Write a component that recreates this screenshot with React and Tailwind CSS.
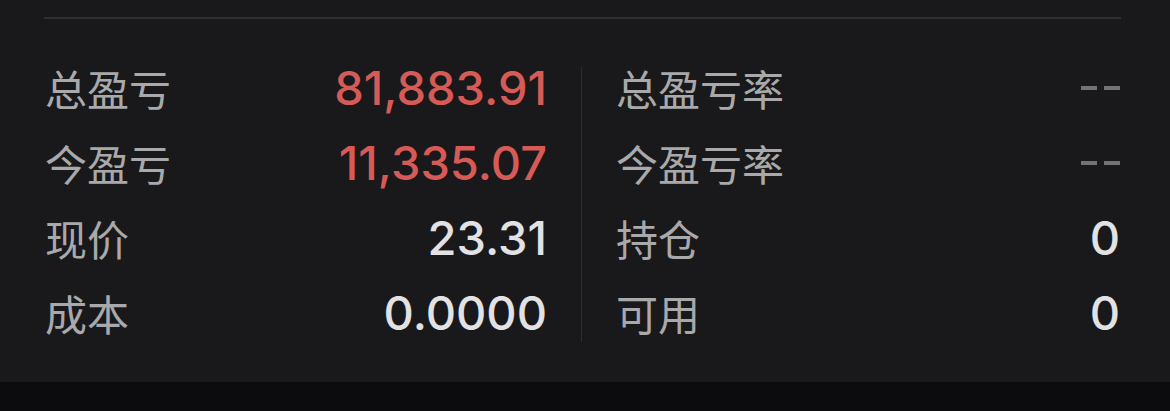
const LEFT = [
  { label: '总盈亏', value: '81,883.91', tone: 'red' },
  { label: '今盈亏', value: '11,335.07', tone: 'red' },
  { label: '现价', value: '23.31', tone: 'white' },
  { label: '成本', value: '0.0000', tone: 'white' },
]

const RIGHT = [
  { label: '总盈亏率', value: '--', tone: 'dim' },
  { label: '今盈亏率', value: '--', tone: 'dim' },
  { label: '持仓', value: '0', tone: 'white' },
  { label: '可用', value: '0', tone: 'white' },
]

const TONES = {
  red: 'text-[#d65a56]',
  white: 'text-[#e2e2e4]',
}

function Dashes() {
  // the "--" placeholder is drawn wider than a hyphen glyph
  return (
    <span className="flex items-center gap-[7px]" aria-label="--">
      <span className="h-[4px] w-[16px] bg-[#737376]" />
      <span className="h-[4px] w-[16px] bg-[#737376]" />
    </span>
  )
}

function Row({ r }) {
  return (
    <div className="flex h-[75px] items-center justify-between">
      <span className="text-[42px] leading-none text-[#a9a9ac] font-['Noto_Sans_CJK_SC',sans-serif]">{r.label}</span>
      {r.tone === 'dim' ? (
        <Dashes />
      ) : (
        <span className={`text-[47px] leading-none font-medium font-['Inter',sans-serif] ${TONES[r.tone]}`}>{r.value}</span>
      )}
    </div>
  )
}

export default function App() {
  return (
    <div className="flex h-[411px] w-[1170px] flex-col bg-[#19191b]">
      <div className="px-[44px] pt-[17px]">
        <div className="h-[2px] w-[1077px] bg-[#2f2f32]" />
      </div>
      <div className="flex pl-[45px] pt-[31px]">
        <div className="w-[502px]">
          {LEFT.map((r, i) => <Row key={i} r={r} />)}
        </div>
        <div className="mx-[34px] mt-[17px] mb-[8px] w-px bg-[#2c2c2f]" />
        <div className="w-[504px]">
          {RIGHT.map((r, i) => <Row key={i} r={r} />)}
        </div>
      </div>
      <div className="mt-auto h-[29px] bg-[#0c0c0e]" />
    </div>
  )
}
